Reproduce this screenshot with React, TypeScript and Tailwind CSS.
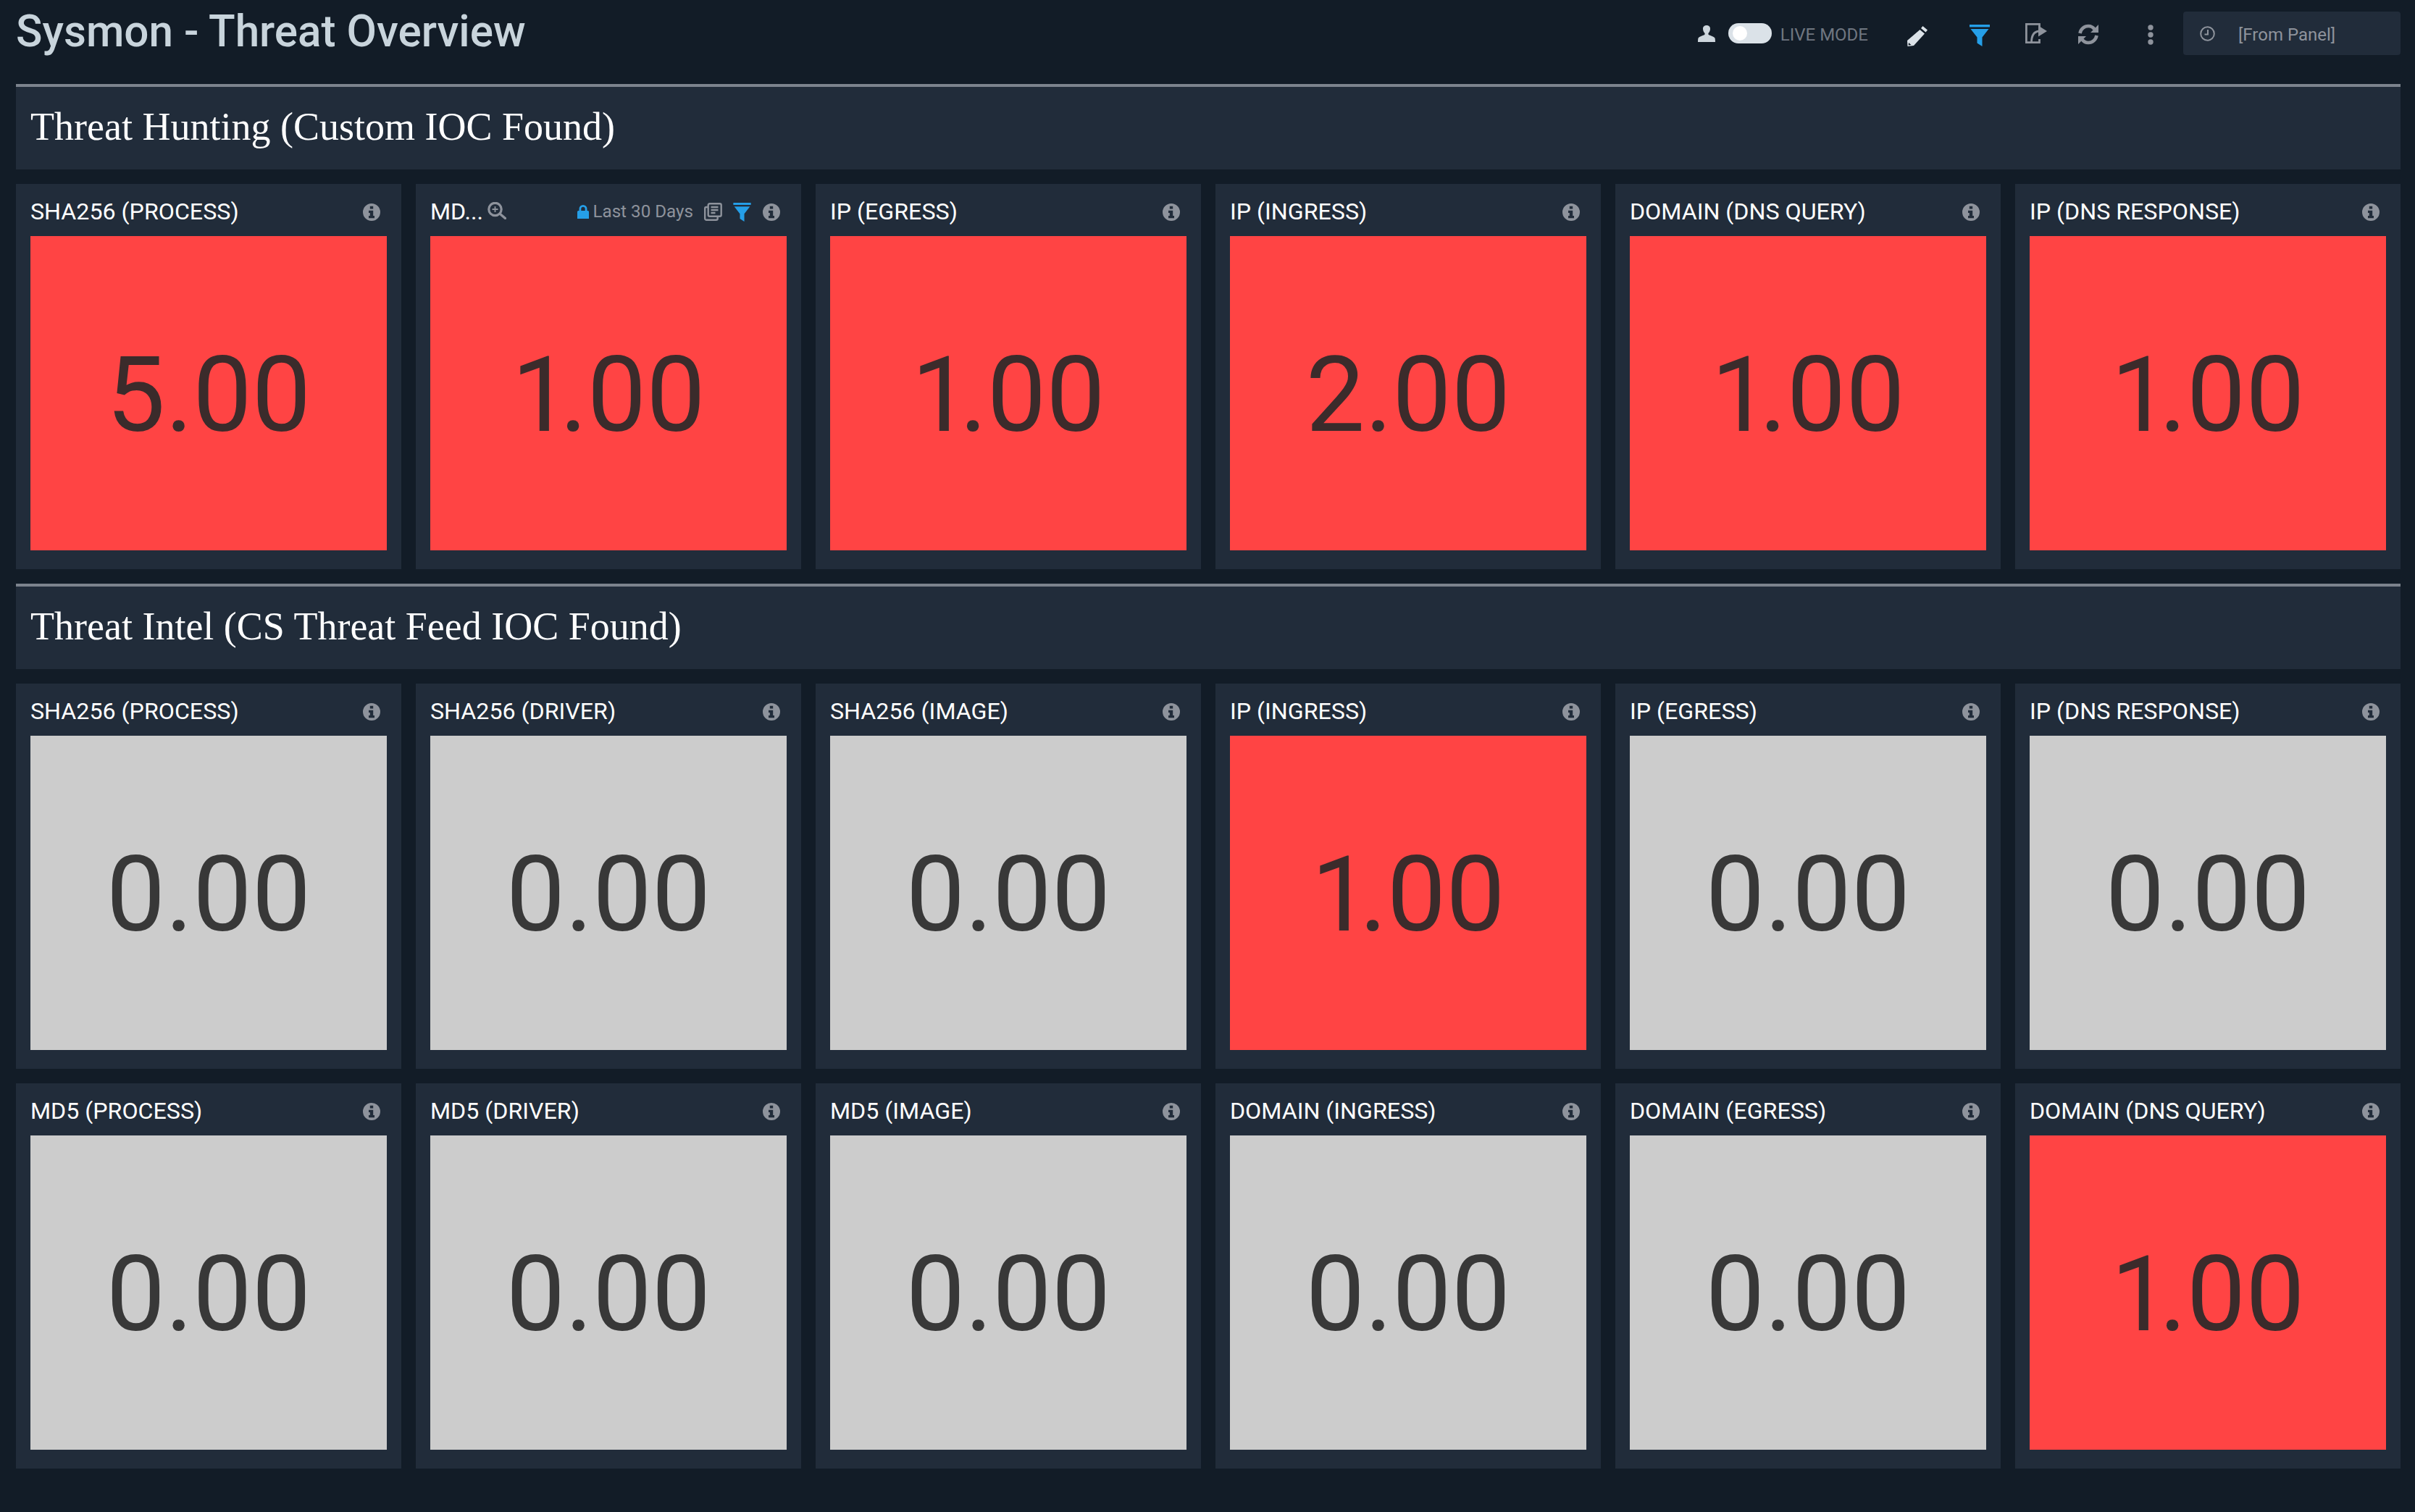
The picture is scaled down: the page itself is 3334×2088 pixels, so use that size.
import React from 'react';

function InfoIcon() {
  return (
    <svg viewBox="0 0 24 24" className="h-6 w-6 shrink-0" fill="#8e939c">
      <path
        fillRule="evenodd"
        d="M12 0a12 12 0 1 0 0 24 12 12 0 0 0 0-24zM9.800 3.800h4.400v3.600H9.800V3.800zM8 9.800h6.200v7.200H16v3.200H8V17h1.800v-4H8V9.800z"
      />
    </svg>
  );
}

function FilterIcon({ className }: { className: string }) {
  return (
    <svg viewBox="0 0 28 30" className={className} fill="#259fe8">
      <rect x="0" y="0" width="28" height="3.400" />
      <path d="M1.500 6h25l-9 11.500V30l-7-4.500v-8z" />
    </svg>
  );
}

function ZoomPanelHeader() {
  return (
    <div className="flex h-[72px] items-center pt-[5px]">
      <span className="text-[32.2px] leading-none text-white">MD...</span>
      <svg viewBox="0 0 26 24" className="mb-1 ml-[6px] h-6 w-[26px]" fill="none" stroke="#8e939c">
        <circle cx="10.500" cy="10" r="8.700" strokeWidth="3.200" />
        <path d="M17.500 16.500l7 6" strokeWidth="3.400" strokeLinecap="round" />
        <path d="M10.500 6v8M6.500 10h8" strokeWidth="1.800" />
      </svg>
      <div className="ml-auto mr-[9px] flex items-center">
        <svg viewBox="0 0 16 19" className="h-[19px] w-4" fill="#259fe8">
          <path
            fillRule="evenodd"
            d="M8 0a5.500 5.500 0 0 0-5.500 5.500V8H1.500A1.500 1.500 0 0 0 0 9.500V19h16V9.500A1.500 1.500 0 0 0 14.500 8h-1V5.500A5.500 5.500 0 0 0 8 0zm0 2.800a2.700 2.700 0 0 1 2.700 2.700V8H5.300V5.500A2.700 2.700 0 0 1 8 2.800z"
          />
        </svg>
        <span className="ml-[5px] text-[24.2px] leading-none text-[#8e939c]">Last 30 Days</span>
        <svg viewBox="0 0 25 25" className="ml-[15px] h-[25px] w-[25px]" fill="none" stroke="#8e939c" strokeWidth="2.400">
          <rect x="5.700" y="1.200" width="18" height="17.500" rx="2" />
          <path d="M5 6H3a1.800 1.800 0 0 0-1.800 1.800v13.900A2.100 2.100 0 0 0 3.300 23.800h13.400a2 2 0 0 0 2-2V19M9.500 6h10M9.500 10h10M9.500 14h6" />
        </svg>
        <FilterIcon className="ml-[15px] h-[26px] w-[25px]" />
        <span className="ml-4">
          <InfoIcon />
        </span>
      </div>
    </div>
  );
}

function PanelHeader({ title }: { title: string }) {
  return (
    <div className="flex h-[72px] items-center justify-between pt-[5px]">
      <span className="text-[32.2px] leading-none whitespace-nowrap text-white">{title}</span>
      <span className="mr-[9px]">
        <InfoIcon />
      </span>
    </div>
  );
}

function Panel({ title, value }: { title: string; value: string }) {
  const isZero = value === '0.00';
  const startsWithOne = value.startsWith('1');
  return (
    <div className="flex h-[532px] flex-col bg-[#212c3a] px-5">
      {title === 'MD5 (PROCESS) ZOOM' ? <ZoomPanelHeader /> : <PanelHeader title={title} />}
      <div
        className={`flex h-[434px] items-center justify-center pt-1 text-[145px] leading-none ${
          isZero ? 'bg-[#cccccc] text-[#383838]' : 'bg-[#ff4444] text-[#3b2b2b]'
        }`}
      >
        {/* the reference's font sets a narrower 1 than the tabular one here */}
        {startsWithOne ? (
          <span>
            <span className="tracking-[-15px]">1</span>
            {value.slice(1)}
          </span>
        ) : (
          value
        )}
      </div>
    </div>
  );
}

function SectionHeader({ title }: { title: string }) {
  return (
    <div className="flex h-[118px] items-center border-t-4 border-[#7c838d] bg-[#212c3a] px-5 pb-1 font-['Liberation_Serif',serif] text-[54px] leading-none text-white">
      {title}
    </div>
  );
}

const hunting = [
  ['SHA256 (PROCESS)', '5.00'],
  ['MD5 (PROCESS) ZOOM', '1.00'],
  ['IP (EGRESS)', '1.00'],
  ['IP (INGRESS)', '2.00'],
  ['DOMAIN (DNS QUERY)', '1.00'],
  ['IP (DNS RESPONSE)', '1.00'],
];

const intel = [
  ['SHA256 (PROCESS)', '0.00'],
  ['SHA256 (DRIVER)', '0.00'],
  ['SHA256 (IMAGE)', '0.00'],
  ['IP (INGRESS)', '1.00'],
  ['IP (EGRESS)', '0.00'],
  ['IP (DNS RESPONSE)', '0.00'],
  ['MD5 (PROCESS)', '0.00'],
  ['MD5 (DRIVER)', '0.00'],
  ['MD5 (IMAGE)', '0.00'],
  ['DOMAIN (INGRESS)', '0.00'],
  ['DOMAIN (EGRESS)', '0.00'],
  ['DOMAIN (DNS QUERY)', '1.00'],
];

function PanelGrid({ panels }: { panels: string[][] }) {
  return (
    <div className="grid grid-cols-6 gap-5">
      {panels.map(([title, value], i) => (
        <Panel key={i} title={title} value={value} />
      ))}
    </div>
  );
}

function Toolbar() {
  return (
    <div className="flex h-[60px] items-center">
      <svg viewBox="0 0 24 23" className="mt-[1px] h-[23px] w-6" fill="#cdd6dd">
        <path d="M12 0c3.400 0 5.200 2.200 5 5.200-.2 2.500-1.300 4.200-2.400 5.600-.5.8-.3 1.900.6 2.400 2.500 1.200 6.600 1.900 8.100 4.100.4.700.7 3 .7 5.700H0c0-2.700.3-5 .7-5.700 1.500-2.200 5.600-2.900 8.100-4.100.9-.5 1.100-1.600.6-2.400C8.300 9.400 7.200 7.700 7 5.200 6.800 2.200 8.600 0 12 0z" />
      </svg>
      <div className="ml-[18px] flex h-7 w-[60px] items-center rounded-full bg-[#dbe2e8] pl-[6px]">
        <div className="h-5 w-5 rounded-full bg-white" />
      </div>
      <span className="mt-[3px] ml-[12px] text-[24px] leading-none text-[#6f7680]">LIVE MODE</span>
      <svg viewBox="0 0 28 28" className="mt-2 ml-[54px] h-7 w-7">
        <path fill="#dbe2e8" d="M21.500 0L28 5.500 25.500 8.500 19 3zM17.500 5L24 10.500 9 27 .5 28 0 20z" />
        <path fill="#121c27" d="M2 23l3.500 3-3.800.5z" />
      </svg>
      <FilterIcon className="mt-[6px] ml-[58px] h-[30px] w-7" />
      <svg viewBox="0 0 30 28" className="ml-[49px] h-7 w-[30px]" fill="none" stroke="#8e939c" strokeWidth="2.800">
        <path d="M19.500 6V1.400H1.400v25.200h18.100V22" />
        <path d="M8.500 27C8.500 17 11.500 11.500 19 11" />
        <path d="M18 3.500L30 11 18 18.500z" fill="#8e939c" stroke="none" />
      </svg>
      <svg viewBox="0 0 28 29" className="mt-[3px] ml-[43px] h-[29px] w-7">
        <path d="M2.500 13C3.500 7 8.500 3 14 3c3.500 0 6.500 1.500 8.500 4.500" fill="none" stroke="#8e939c" strokeWidth="4.600" />
        <path d="M25.500 16c-1 6-6 10-11.500 10-3.500 0-6.500-1.500-8.500-4.500" fill="none" stroke="#8e939c" strokeWidth="4.600" />
        <path d="M28 1v11H17zM0 28V17h11z" fill="#8e939c" />
      </svg>
      <svg viewBox="0 0 8 28" className="mt-1 ml-[68px] h-7 w-2" fill="#8e939c">
        <circle cx="4" cy="4" r="3.700" />
        <circle cx="4" cy="14" r="3.700" />
        <circle cx="4" cy="24" r="3.700" />
      </svg>
      <div className="ml-[41px] flex h-[60px] w-[300px] items-center rounded-[4px] bg-[#212c3a] pl-[23px]">
        <svg viewBox="0 0 21 21" className="h-[21px] w-[21px]" fill="none" stroke="#8e939c" strokeWidth="2">
          <circle cx="10.500" cy="10.500" r="9.300" />
          <path d="M11 5v6.500H6.500" />
        </svg>
        <span className="mt-[3px] ml-[32px] text-[24px] leading-none text-[#8e939c]">[From Panel]</span>
      </div>
    </div>
  );
}

export default function App() {
  return (
    <div className="min-h-[2088px] w-[3334px] bg-[#121c27] pr-5 pl-[22px] font-['Roboto',sans-serif]">
      <div className="flex h-[116px] items-start justify-between">
        <h1 className="mt-[14px] text-[60.2px] leading-none font-medium whitespace-nowrap text-[#c8d4dc]">
          Sysmon - Threat Overview
        </h1>
        <div className="mt-4">
          <Toolbar />
        </div>
      </div>
      <div className="flex flex-col gap-5">
        <SectionHeader title="Threat Hunting (Custom IOC Found)" />
        <PanelGrid panels={hunting} />
        <SectionHeader title="Threat Intel (CS Threat Feed IOC Found)" />
        <PanelGrid panels={intel} />
      </div>
    </div>
  );
}
